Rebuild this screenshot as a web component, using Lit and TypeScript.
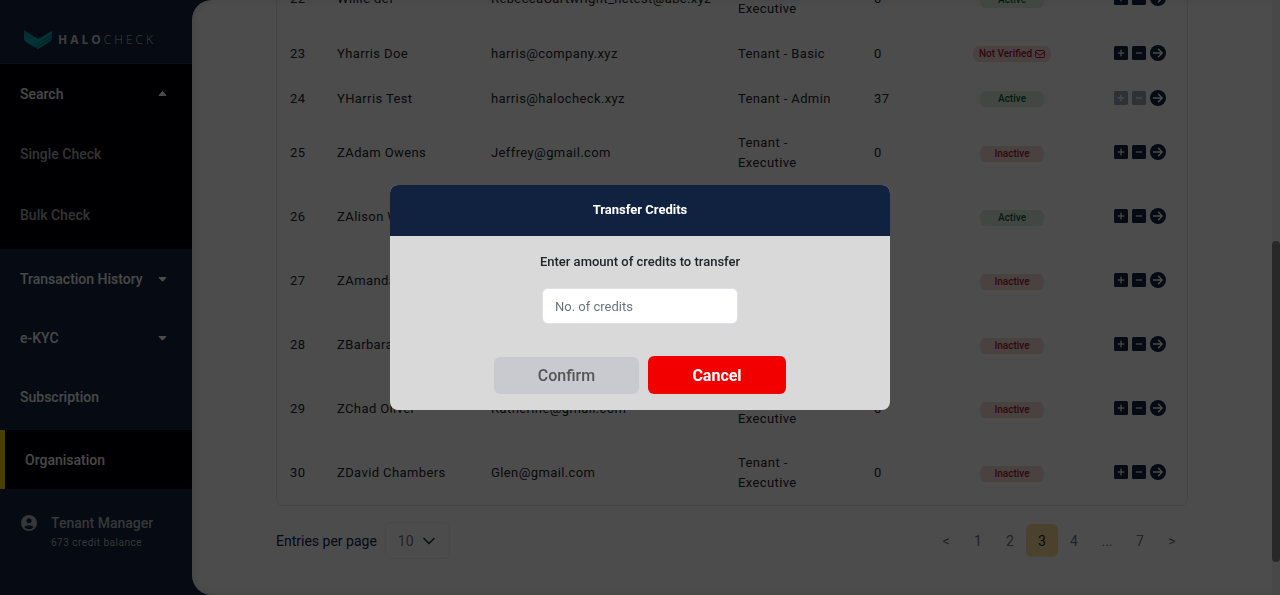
import { LitElement, html, css } from "lit";
import { customElement } from "lit/decorators.js";
import { classMap } from "lit/directives/class-map.js";

interface User {
  id: number;
  name: string;
  email: string;
  role: string;
  credits: number;
  status: "Active" | "Inactive" | "Not Verified";
  locked?: boolean;
}

const EXEC = "Tenant - Executive";

const users: User[] = [
  { id: 22, name: "Willie def", email: "RebeccaCartwright_hctest@abc.xyz", role: EXEC, credits: 0, status: "Active" },
  { id: 23, name: "Yharris Doe", email: "harris@company.xyz", role: "Tenant - Basic", credits: 0, status: "Not Verified" },
  { id: 24, name: "YHarris Test", email: "harris@halocheck.xyz", role: "Tenant - Admin", credits: 37, status: "Active", locked: true },
  { id: 25, name: "ZAdam Owens", email: "Jeffrey@gmail.com", role: EXEC, credits: 0, status: "Inactive" },
  { id: 26, name: "ZAlison W", email: "", role: EXEC, credits: 0, status: "Active" },
  { id: 27, name: "ZAmanda", email: "", role: EXEC, credits: 0, status: "Inactive" },
  { id: 28, name: "ZBarbara", email: "", role: EXEC, credits: 0, status: "Inactive" },
  { id: 29, name: "ZChad Oliver", email: "Katherine@gmail.com", role: EXEC, credits: 0, status: "Inactive" },
  { id: 30, name: "ZDavid Chambers", email: "Glen@gmail.com", role: EXEC, credits: 0, status: "Inactive" },
];

const pages = ["<", "1", "2", "3", "4", "...", "7", ">"];

const squareIcon = (vertical: boolean) => html`<svg width="14" height="14" viewBox="0 0 14 14" aria-hidden="true">
  <rect width="14" height="14" rx="1.500" fill="#112240"></rect>
  <path d=${vertical ? "M4.300 7h5.400M7 4.300v5.400" : "M4.500 7h5"} stroke="#ddd" stroke-width="1.500" stroke-linecap="round"></path>
</svg>`;

const arrowIcon = html`<svg width="16" height="16" viewBox="0 0 16 16" aria-hidden="true">
  <circle cx="8" cy="8" r="8" fill="#112240"></circle>
  <path d="M3.500 8h8.500M8.500 4.300 12.200 8l-3.700 3.700" fill="none" stroke="#fff" stroke-width="1.500" stroke-linecap="round" stroke-linejoin="round"></path>
</svg>`;

const mailIcon = html`<svg width="10" height="8" viewBox="0 0 10 8" aria-hidden="true">
  <rect x=".5" y=".5" width="9" height="7" rx="1" fill="none" stroke="currentColor"></rect>
  <path d="M.7 2.200 5 5.200l4.300-3" fill="none" stroke="currentColor"></path>
</svg>`;

const caret = (up: boolean) => html`<svg width="9" height="6" viewBox="0 0 9 6" aria-hidden="true">
  <path d=${up ? "M4.500 .5 8 4.500H1z" : "M1 1.500h7L4.500 5.200z"} fill="#fff" stroke="#fff" stroke-linejoin="round"></path>
</svg>`;

@customElement("side-nav")
class SideNav extends LitElement {
  static styles = css`
    :host { display: flex; flex-direction: column; background: #112240; color: #fff; }
    .brand { display: flex; align-items: center; gap: 6px; height: 64px; padding: 16px 24px 0; box-sizing: border-box; border-bottom: 1px solid #1f3657; }
    .word { font: 700 12px "Open Sans", sans-serif; letter-spacing: 3px; color: #ccc; }
    .thin { font-weight: 300; }
    .item { display: flex; align-items: center; justify-content: space-between; height: 59px; padding: 0 25px 0 20px; box-sizing: border-box;
      font-size: 14px; font-weight: 500; color: #eee; text-decoration: none; }
    .group { background: #010208; padding-bottom: 4px; }
    .sub { height: 61px; color: #aaa; }
    .current { background: #010208; border-left: 5px solid #ffd700; margin-top: 4px; }
    .user { display: grid; grid-template-columns: 16px 1fr; column-gap: 14px; align-items: center; padding: 23px 21px 0; color: #b4b7bb; border-top: 1px solid #14294b; }
    .name { font-size: 14px; line-height: 20px; font-weight: 500; }
    .balance { grid-column: 2; font-size: 10px; line-height: 20px; letter-spacing: .05em; }
  `;
  render() {
    return html`
      <div class="brand">
        <svg width="28" height="19" viewBox="0 0 28 19" aria-hidden="true">
          <defs><linearGradient id="g" x2="1" y2="1"><stop stop-color="#00a0b0"></stop><stop offset="1" stop-color="#00b4c0"></stop></linearGradient></defs>
          <path d="M0 0 14 9 28 1V4.300L10 15.500 8.500 16 1.500 11.500Q0 10.500 0 8z" fill="url(#g)"></path>
          <path d="M28 4.800V7.800L13 17.500 9.500 15.800z" fill="#009dac"></path>
          <path d="M27.500 8.500Q27.500 10.500 26 11.500L14 19 8.500 16 10 15.800 13.200 17.700z" fill="#00b0bd"></path>
        </svg>
        <span class="word">HALO<span class="thin">CHECK</span></span>
      </div>
      <nav>
        <div class="group">
          <a class="item" href="#search">Search ${caret(true)}</a>
          <a class="item sub" href="#single">Single Check</a>
          <a class="item sub" href="#bulk">Bulk Check</a>
        </div>
        <a class="item" href="#history">Transaction History ${caret(false)}</a>
        <a class="item" href="#ekyc">e-KYC ${caret(false)}</a>
        <a class="item" href="#subscription">Subscription</a>
        <a class="item current" href="#organisation" aria-current="page">Organisation</a>
      </nav>
      <div class="user">
        <svg width="16" height="16" viewBox="0 0 16 16" aria-hidden="true">
          <circle cx="8" cy="8" r="8" fill="#b4b7bb"></circle>
          <circle cx="8" cy="5.800" r="2.500" fill="#112240"></circle>
          <path d="M3.200 12a5.500 3.400 0 0 1 9.600 0 6.200 6.200 0 0 1-9.600 0z" fill="#112240"></path>
        </svg>
        <span class="name">Tenant Manager</span>
        <span class="balance">673 credit balance</span>
      </div>`;
  }
}

@customElement("user-table")
class UserTable extends LitElement {
  static styles = css`
    :host { display: block; border: 1px solid #e6e8ec; border-radius: 6px; }
    table { width: 100%; table-layout: fixed; border-collapse: collapse; }
    td { height: 45px; padding: 0 13px; box-sizing: border-box; font-size: 13px; line-height: 20px; letter-spacing: .03em; color: #212529; }
    .tall td { height: 64px; }
    .c-id { width: 47px; } .c-name { width: 154px; } .c-mail { width: 247px; } .c-role { width: 136px; }
    .c-credits { width: 93px; } .c-status { width: 116px; } .c-actions { width: 117px; }
    .role { padding-right: 26px; }
    .status { text-align: center; }
    .badge { display: inline-flex; align-items: center; justify-content: center; gap: 3px; min-width: 64px; height: 16px; padding: 0 6px; box-sizing: border-box;
      border-radius: 6px; font-size: 10px; line-height: 16px; font-weight: 500; letter-spacing: normal; vertical-align: middle; }
    .good { background: #dcefe3; color: #0a5c34; }
    .bad { background: #f4dcd7; color: #a8143a; }
    .actions { display: flex; justify-content: flex-end; align-items: center; gap: 4px; padding: 0 8px 2px 0; }
    button { display: flex; border: 0; padding: 0; background: none; }
    button:disabled { opacity: .4; }
  `;
  render() {
    return html`<table>
      <colgroup><col class="c-id"><col class="c-name"><col class="c-mail"><col class="c-role"><col class="c-credits"><col class="c-status"><col class="c-actions"></colgroup>
      <tbody>
        ${users.map((u) => html`<tr class=${classMap({ tall: u.role === EXEC })}>
          <td>${u.id}</td>
          <td>${u.name}</td>
          <td>${u.email}</td>
          <td class="role">${u.role}</td>
          <td>${u.credits}</td>
          <td class="status"><span class=${classMap({ badge: true, good: u.status === "Active", bad: u.status !== "Active" })}>${u.status}${u.status === "Not Verified" ? mailIcon : ""}</span></td>
          <td><div class="actions">
            <button aria-label="Add credits" ?disabled=${u.locked}>${squareIcon(true)}</button>
            <button aria-label="Remove credits" ?disabled=${u.locked}>${squareIcon(false)}</button>
            <button aria-label="Open user">${arrowIcon}</button>
          </div></td>
        </tr>`)}
      </tbody>
    </table>`;
  }
}

@customElement("table-pager")
class TablePager extends LitElement {
  static styles = css`
    :host { display: flex; align-items: center; justify-content: space-between; font-size: 14px; color: #112240; }
    .size { display: flex; align-items: center; gap: 8px; }
    .picker { display: grid; align-items: center; }
    select, .chevron { grid-area: 1 / 1; }
    select { appearance: none; width: 65px; height: 37px; padding: 0 12px; border: 1px solid #eef0f3; border-radius: 6px; background: transparent; font: 400 14px Roboto, sans-serif; color: #6c757d; }
    .chevron { justify-self: end; margin-right: 15px; pointer-events: none; }
    .pages { display: flex; }
    button { width: 32px; height: 33px; padding: 0; border: 0; border-radius: 6px; background: none; font: 400 14px Roboto, sans-serif; color: #6c757d; }
    .gap { width: 34px; }
    .active { background: #f8dc94; color: #212529; }
  `;
  render() {
    return html`
      <div class="size">
        <label for="size">Entries per page</label>
        <span class="picker">
          <select id="size"><option>10</option></select>
          <svg class="chevron" width="12" height="8" viewBox="0 0 12 8" aria-hidden="true"><path d="m1 1.500 5 5 5-5" fill="none" stroke="#343a40" stroke-width="1.700" stroke-linecap="round" stroke-linejoin="round"></path></svg>
        </span>
      </div>
      <div class="pages">${pages.map((p) => html`<button class=${classMap({ active: p === "3", gap: p === "..." })}>${p}</button>`)}</div>`;
  }
}

@customElement("transfer-dialog")
class TransferDialog extends LitElement {
  static styles = css`
    :host { position: fixed; inset: 0; display: flex; align-items: center; justify-content: center; background: rgba(0, 0, 0, .7); }
    .dialog { width: 500px; max-width: 100%; border-radius: 8px; overflow: hidden; background: #d9d9d9; }
    .title { margin: 0; padding: 15px 0 16px; background: #112240; color: #fff; font-size: 13px; line-height: 20px; font-weight: 700; text-align: center; }
    .body { display: flex; flex-direction: column; align-items: center; padding: 16px; }
    label { font-size: 13px; line-height: 20px; font-weight: 500; color: #212529; }
    input { width: 196px; height: 36px; margin-top: 16px; padding: 0 12px; box-sizing: border-box; border: 1px solid #dee2e6; border-radius: 6px; background: #fff; font: 400 13px Roboto, sans-serif; color: #212529; }
    input::placeholder { color: #6c757d; }
    .buttons { display: flex; align-items: center; gap: 9px; margin-top: 32px; }
    button { border: 0; border-radius: 6px; font: 500 16px Roboto, sans-serif; }
    .confirm { width: 145px; height: 37px; background: #c9cad0; color: #555; }
    .cancel { width: 138px; height: 38px; background: #f20000; color: #fff; font-weight: 700; }
  `;
  render() {
    return html`<form class="dialog" role="dialog" aria-modal="true" aria-labelledby="title">
      <h2 class="title" id="title">Transfer Credits</h2>
      <div class="body">
        <label for="credits">Enter amount of credits to transfer</label>
        <input id="credits" type="text" inputmode="numeric" placeholder="No. of credits">
        <div class="buttons">
          <button class="confirm" type="button" disabled>Confirm</button>
          <button class="cancel" type="button">Cancel</button>
        </div>
      </div>
    </form>`;
  }
}

@customElement("app-root")
class AppRoot extends LitElement {
  static styles = css`
    :host { display: grid; grid-template-columns: 192px 1fr; height: 100vh; overflow: hidden; background: #112240; font-family: Roboto, sans-serif; }
    .main { display: grid; grid-template-columns: 1fr 8px; min-height: 0; overflow: hidden; background: #fff; border-radius: 20px 0 0 20px; box-shadow: inset 0 0 8px #ddd; }
    .content { display: flex; flex-direction: column; justify-content: flex-end; gap: 16px; min-height: 0; padding: 0 84px 36px; }
    .track { display: grid; grid-template-rows: 241fr 321fr 33fr; background: #f1f1f1; }
    .thumb { grid-row: 2; border-radius: 4px; background: #888; }
  `;
  render() {
    return html`
      <side-nav></side-nav>
      <main class="main">
        <div class="content"><user-table></user-table><table-pager></table-pager></div>
        <div class="track"><div class="thumb"></div></div>
      </main>
      <transfer-dialog></transfer-dialog>`;
  }
}
